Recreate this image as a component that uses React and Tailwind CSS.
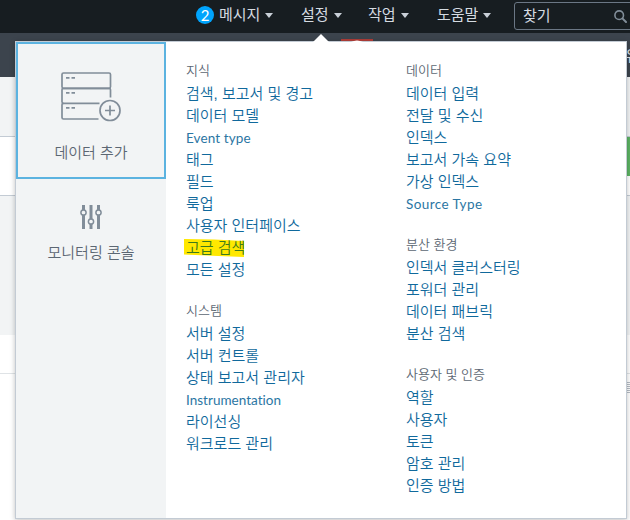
const font =
  "font-['Liberation_Sans','Noto_Sans_CJK_KR',sans-serif]";
const latin = "font-['Lato','Noto_Sans_CJK_KR',sans-serif]";

const leftColumn = [
  {
    title: '지식',
    links: [
      '검색, 보고서 및 경고',
      '데이터 모델',
      'Event type',
      '태그',
      '필드',
      '룩업',
      '사용자 인터페이스',
      '고급 검색',
      '모든 설정',
    ],
  },
  {
    title: '시스템',
    links: [
      '서버 설정',
      '서버 컨트롤',
      '상태 보고서 관리자',
      'Instrumentation',
      '라이선싱',
      '워크로드 관리',
    ],
  },
];

const rightColumn = [
  {
    title: '데이터',
    links: ['데이터 입력', '전달 및 수신', '인덱스', '보고서 가속 요약', '가상 인덱스', 'Source Type'],
  },
  {
    title: '분산 환경',
    links: ['인덱서 클러스터링', '포워더 관리', '데이터 패브릭', '분산 검색'],
  },
  {
    title: '사용자 및 인증',
    links: ['역할', '사용자', '토큰', '암호 관리', '인증 방법'],
  },
];

const latinTracking = {
  'Event type': 'tracking-[0.1px]',
  Instrumentation: 'tracking-[0.02px]',
  'Source Type': 'tracking-[0.4px]',
};

function Caret() {
  return (
    <svg className="ml-[5px] h-[5px] w-2 shrink-0" viewBox="0 0 8 5">
      <path d="M0 0h8L4 5z" fill="#c9d0d8" />
    </svg>
  );
}

function NavItem({ label, className }) {
  return (
    <div className={`flex h-[30px] shrink-0 items-center whitespace-nowrap ${className}`}>
      <span>{label}</span>
      <Caret />
    </div>
  );
}

function NavBar() {
  return (
    <div className="flex h-[33px] items-start bg-[#171d21] pl-[196px] text-[15px] leading-[30px] text-[#d5dbe1]">
      <div className="mt-1.5 flex h-[18px] w-[18px] shrink-0 items-center justify-center rounded-full bg-[#00a4fd] font-['Lato',sans-serif] text-[15px] text-white">
        2
      </div>
      <NavItem label="메시지" className="ml-[5px] w-[82px]" />
      <NavItem label="설정" className="w-[67px]" />
      <NavItem label="작업" className="w-[69px]" />
      <NavItem label="도움말" className="w-[77px]" />
      <div className="mt-0.5 flex h-7 w-[125px] shrink-0 items-center justify-between rounded-[3px] border border-[#6b7785] pl-2 pr-[11px]">
        <span className="-mt-0.5 leading-none">찾기</span>
        <svg className="h-[13px] w-[13px]" viewBox="0 0 13 13" fill="none" stroke="#818d99">
          <circle cx="5.2" cy="5.2" r="4.3" strokeWidth="1.6" />
          <path d="M8.4 8.4l3.6 3.6" strokeWidth="2" strokeLinecap="round" />
        </svg>
      </div>
    </div>
  );
}

function Backdrop() {
  return (
    <div>
      <div className="flex h-11 justify-end overflow-hidden bg-[#3c444d] pt-3 text-[15px] text-[#e0e4e8]">
        <span className="-mr-[9px]">유</span>
      </div>
      <div className="h-[60px] border-b border-[#c3cbd4] bg-[#f2f4f5]" />
      <div className="flex h-[59px] items-start justify-end border-b border-[#c3cbd4] bg-white">
        <div className="h-[39px] w-6 bg-[#5cb363]" />
      </div>
      <div className="h-[139px] bg-[#f2f4f5]" />
      <div className="h-[39px] border-b border-[#dfe3e6] bg-white" />
      <div className="flex h-[146px] justify-end bg-white pt-2">
        <div className="flex flex-col gap-px">
          <div className="h-px w-3 bg-[#b5bcc4]" />
          <div className="h-px w-3 bg-[#b5bcc4]" />
          <div className="h-px w-3 bg-[#b5bcc4]" />
          <div className="h-px w-3 bg-[#b5bcc4]" />
          <div className="h-px w-3 bg-[#b5bcc4]" />
          <div className="h-px w-3 bg-[#b5bcc4]" />
        </div>
      </div>
    </div>
  );
}

function ServerIcon() {
  return (
    <svg className="ml-0.5 h-[50px] w-[62px]" viewBox="0 0 62 50" fill="none" stroke="#818d99" strokeWidth="1.7">
      <path d="M2.5 1h45.500a1.500 1.500 0 0 1 1.500 1.500v12.300a1.500 1.500 0 0 1-1.500 1.500h-45.500A1.500 1.500 0 0 1 1 14.800V2.500A1.500 1.500 0 0 1 2.500 1z" />
      <path d="M49.500 25.500v-7.700a1.500 1.500 0 0 0-1.500-1.500h-45.500A1.500 1.500 0 0 0 1 17.800v12a1.500 1.500 0 0 0 1.500 1.500H38.500" />
      <path d="M2.500 31.300A1.500 1.500 0 0 0 1 32.800v12.700A1.500 1.500 0 0 0 2.500 47H37.500" />
      <path d="M5 5.800h3.500M10.500 5.800H14M5 20.800h3.500M10.500 20.800H14M5 35.800h3.500M10.500 35.800H14" />
      <circle cx="49" cy="38.500" r="10" />
      <path d="M49 33.500v10M44 38.500h10" />
    </svg>
  );
}

function SlidersIcon() {
  return (
    <svg className="h-6 w-[22px]" viewBox="0 0 22 24" fill="none" stroke="#818d99">
      <path d="M3.500 0v5M3.500 10v14M11 0v14M11 19v5M18.500 0v5M18.500 10v14" strokeWidth="3" />
      <circle cx="3.500" cy="7.500" r="2.600" strokeWidth="1.500" fill="#f2f4f5" />
      <circle cx="11" cy="16.500" r="2.600" strokeWidth="1.500" fill="#f2f4f5" />
      <circle cx="18.500" cy="7.500" r="2.600" strokeWidth="1.500" fill="#f2f4f5" />
    </svg>
  );
}

function MenuLink({ label }) {
  if (latinTracking[label]) {
    return (
      <a
        className={`flex h-[22px] items-center pt-[3px] text-[13.5px] font-normal text-[#2b76a3] ${latin} ${latinTracking[label]}`}
      >
        {label}
      </a>
    );
  }
  if (label === '고급 검색') {
    return (
      <a className="relative flex h-[22px] items-center pt-0.5 text-[#3c7a1c]">
        <svg className="absolute -left-0.5 top-0.5 h-[19px] w-[61px]" viewBox="0 0 61 19">
          <path d="M0 1L30 1.500L60 3V19L34 18L0 16.500z" fill="#ffe800" />
        </svg>
        <span className="relative">{label}</span>
      </a>
    );
  }
  return <a className="flex h-[22px] items-center pt-0.5">{label}</a>;
}

function Column({ groups, className }) {
  return (
    <div className={`flex flex-col gap-[18px] whitespace-nowrap pt-4 ${className}`}>
      {groups.map((group) => (
        <section key={group.title}>
          <h2 className="flex h-6 items-center pt-px text-[13px] font-[350] text-[#5c6773]">{group.title}</h2>
          <nav className="text-[15px] font-[350] text-[#10699c]">
            {group.links.map((label) => (
              <MenuLink key={label} label={label} />
            ))}
          </nav>
        </section>
      ))}
    </div>
  );
}

function SettingsMenu() {
  return (
    <div className="absolute left-[15px] top-[41px] flex h-[478px] w-[612px] border border-[#c3cbd4] bg-white shadow-[0_1px_5px_rgba(0,0,0,0.25)]">
      <svg className="absolute left-[297px] -top-2 h-2 w-4" viewBox="0 0 16 8">
        <path d="M8 0l8 8H0z" fill="#fff" />
      </svg>
      <svg className="absolute left-[325px] -top-[3px] h-[3px] w-8" viewBox="0 0 32 3">
        <path d="M0 0h32v2H0z" fill="#a83a35" />
        <path d="M10 3q6-3 12 0z" fill="#fff" />
      </svg>
      <aside className="flex w-[150px] shrink-0 flex-col items-center bg-[#f2f4f5] text-[15px] font-[350] leading-[22px] text-[#5c6773]">
        <div className="flex h-[137px] w-full flex-col items-center border-2 border-[#5cb3e0] pt-7">
          <ServerIcon />
          <span className="mt-5">데이터 추가</span>
        </div>
        <div className="flex flex-col items-center pt-[26px]">
          <SlidersIcon />
          <span className="mt-[13px]">모니터링 콘솔</span>
        </div>
      </aside>
      <Column groups={leftColumn} className="ml-5 w-[220px]" />
      <Column groups={rightColumn} className="w-[200px]" />
    </div>
  );
}

export default function App() {
  return (
    <div className={`relative h-[520px] w-[630px] overflow-hidden ${font}`}>
      <NavBar />
      <Backdrop />
      <SettingsMenu />
    </div>
  );
}
